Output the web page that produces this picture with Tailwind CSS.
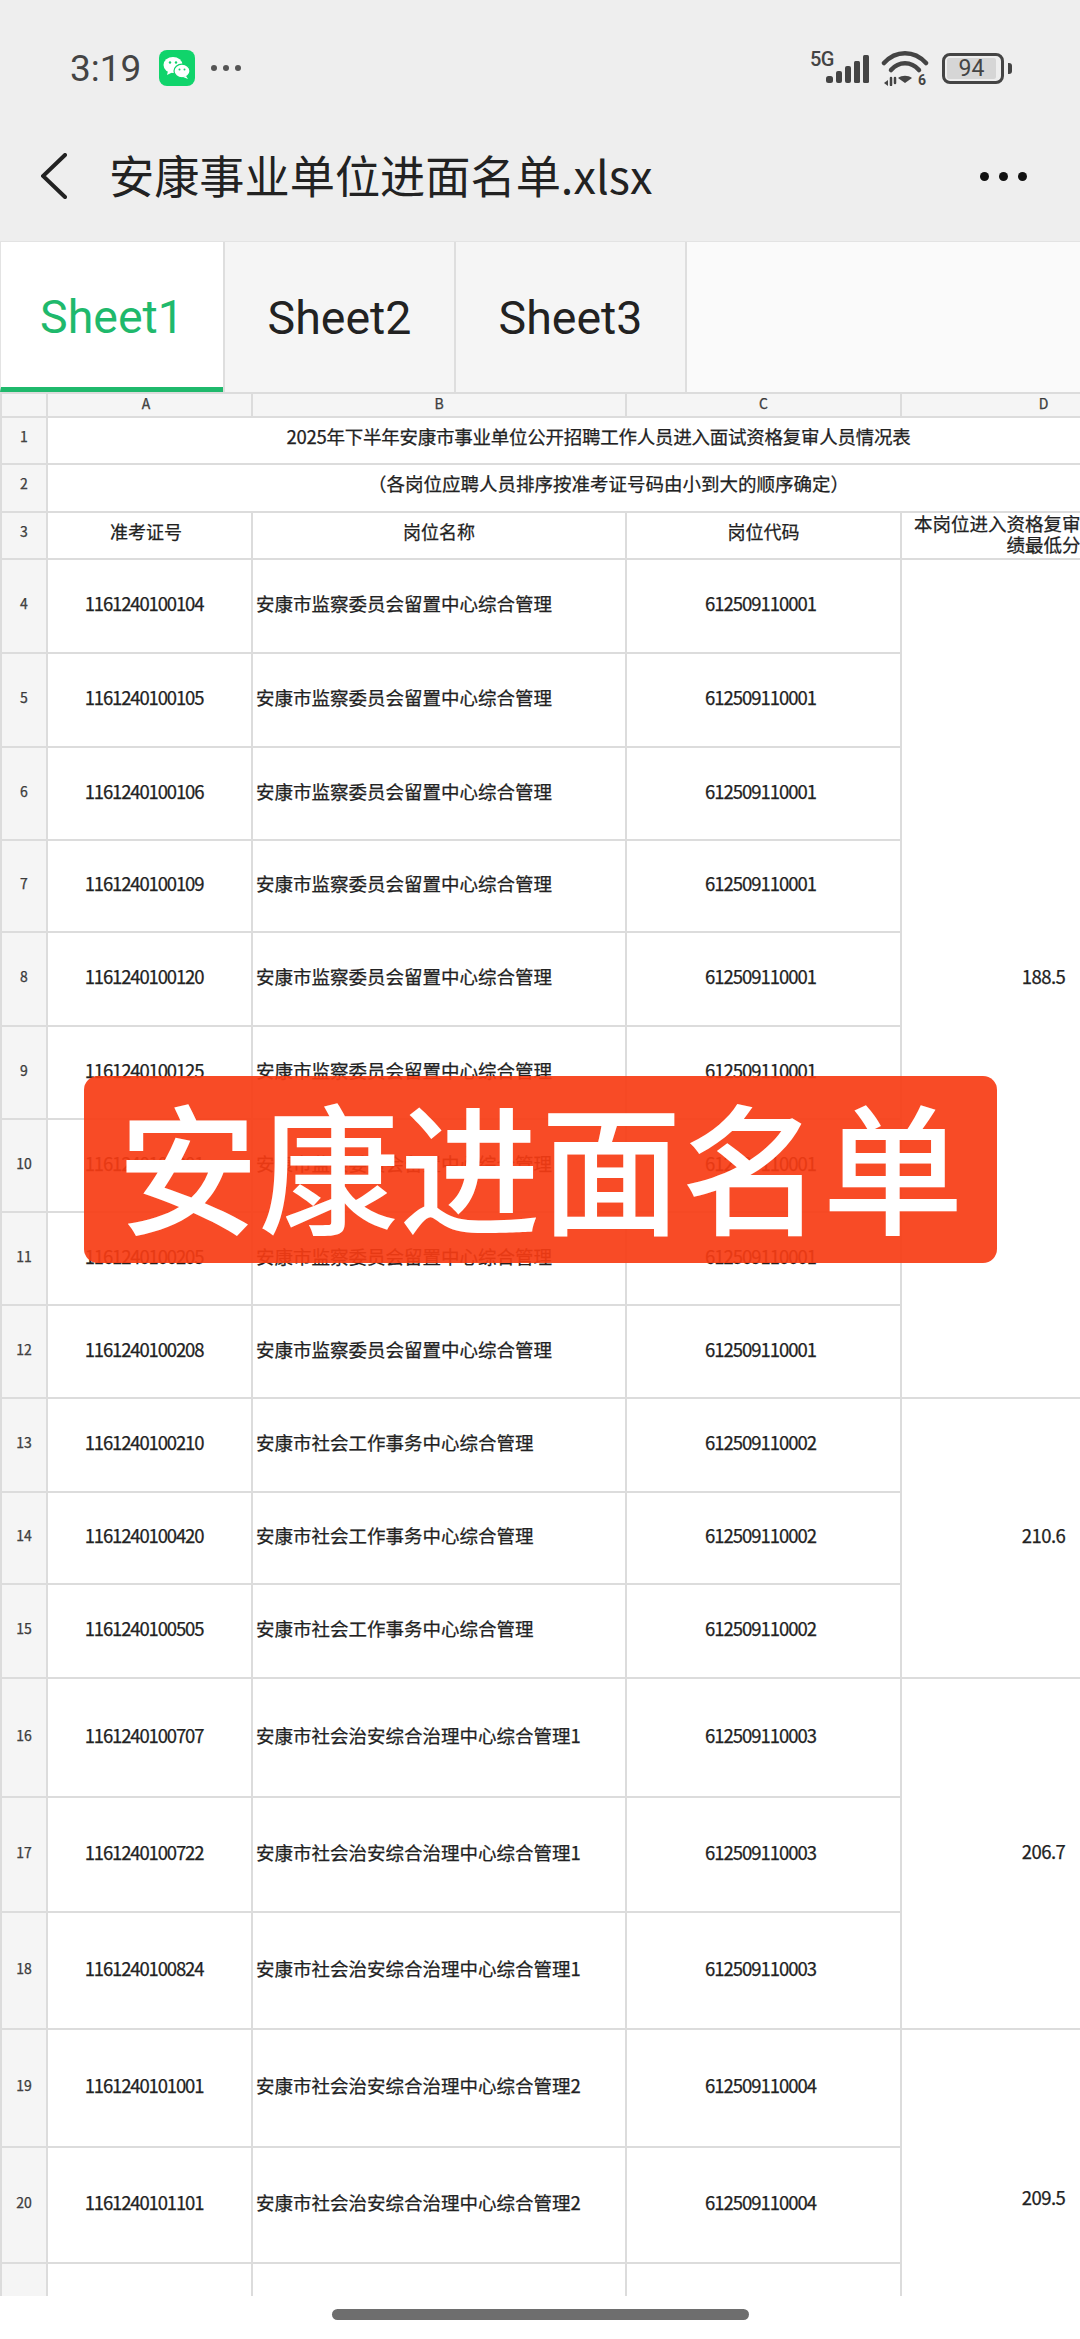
<!DOCTYPE html>
<html lang="zh-CN">
<head>
<meta charset="utf-8">
<title>安康事业单位进面名单.xlsx</title>
<script src="https://cdn.jsdelivr.net/npm/@tailwindcss/browser@4"></script>
</head>
<body class="m-0 bg-white">
<div class="relative w-[1080px] h-[2339px] overflow-hidden bg-white font-['Noto_Sans_CJK_SC','Noto_Sans',sans-serif] text-[#222]">

  <!-- Header -->
  <header class="h-[241px] bg-[#eeeeee] flex flex-col">
    <div class="flex items-center h-[36px] mt-[50px] pl-[70px] pr-[69px]">
      <span class="font-['Roboto',sans-serif] text-[37px] leading-none text-[#444] w-[89px]">3:19</span>
      <svg class="w-[36px] h-[36px]" viewBox="0 0 36 36">
        <rect width="36" height="36" rx="8" fill="#10d46b"/>
        <ellipse cx="14" cy="15" rx="9.5" ry="8" fill="#fff"/>
        <path d="M9 21l-1 4 5-2.5z" fill="#fff"/>
        <ellipse cx="23" cy="21" rx="8" ry="6.8" fill="#fff" stroke="#10d46b" stroke-width="1.2"/>
        <path d="M27 26l2 3-5-2z" fill="#fff"/>
        <circle cx="11" cy="12.5" r="1.2" fill="#10d46b"/><circle cx="17" cy="12.5" r="1.2" fill="#10d46b"/>
        <circle cx="20.5" cy="19.5" r="1" fill="#10d46b"/><circle cx="25.5" cy="19.5" r="1" fill="#10d46b"/>
      </svg>
      <div class="flex gap-[6px] ml-[16px]">
        <span class="w-[6px] h-[6px] rounded-full bg-[#555]"></span>
        <span class="w-[6px] h-[6px] rounded-full bg-[#555]"></span>
        <span class="w-[6px] h-[6px] rounded-full bg-[#555]"></span>
      </div>
      <div class="ml-auto flex items-center">
        <div class="relative w-[60px] h-[36px]">
          <span class="absolute left-0 top-[-1px] font-['Roboto',sans-serif] font-medium text-[20px] leading-[20px] tracking-[-0.5px] text-[#444]">5G</span>
          <svg class="absolute left-0 top-0 w-[60px] h-[36px]" viewBox="0 0 60 36" fill="#444">
            <rect x="16" y="26" width="7" height="7" rx="2.5"/>
            <rect x="26" y="21" width="6" height="12" rx="2"/>
            <rect x="35" y="16" width="6" height="17" rx="2"/>
            <rect x="44" y="11" width="6" height="22" rx="1.5"/>
            <rect x="53" y="5" width="6" height="28" rx="1.5"/>
          </svg>
        </div>
        <svg class="w-[48px] h-[36px] ml-[11px]" viewBox="0 0 48 36" fill="none" stroke="#444" stroke-linecap="round">
          <path d="M3 13C15 0 33 0 45 13" stroke-width="4.5"/>
          <path d="M10 20C18 11 30 11 38 20" stroke-width="4.5"/>
          <path d="M24 33l-7-5c4-3 10-3 14 0z" fill="#444" stroke="none"/>
          <path d="M3 33l4-3v6z" fill="#444" stroke="none"/>
          <path d="M10 28v7M14 28v5" stroke-width="2.5"/>
          <text x="37" y="35" font-size="14" font-weight="700" fill="#444" stroke="none" font-family="Roboto">6</text>
        </svg>
        <div class="relative w-[62px] h-[31px] ml-[13px] border-[3px] border-[#444] rounded-[8px] p-[2px]">
          <div class="h-full w-[49px] bg-[#d6d6d6] rounded-[2px] flex items-center justify-center">
            <span class="font-['Roboto',sans-serif] text-[23px] leading-none text-[#444]">94</span>
          </div>
          <div class="absolute left-[63px] top-[7px] w-[4px] h-[11px] rounded-r-[3px] bg-[#444]"></div>
        </div>
        <div class="w-[7px]"></div>
      </div>
    </div>
    <div class="flex items-center h-[60px] mt-[60px] pl-[41px] pr-[53px]">
      <svg class="w-[26px] h-[46px]" viewBox="0 0 26 46" fill="none" stroke="#222" stroke-width="4" stroke-linecap="round" stroke-linejoin="miter">
        <path d="M24 2L2 23l22 21"/>
      </svg>
      <h1 class="ml-[42px] mb-[2px] text-[45.2px] leading-none font-normal text-[#222] whitespace-nowrap">安康事业单位进面名单.xlsx</h1>
      <div class="ml-auto flex gap-[10px]">
        <span class="w-[9px] h-[9px] rounded-full bg-[#111]"></span>
        <span class="w-[9px] h-[9px] rounded-full bg-[#111]"></span>
        <span class="w-[9px] h-[9px] rounded-full bg-[#111]"></span>
      </div>
    </div>
  </header>

  <!-- Sheet tabs -->
  <nav class="h-[151px] bg-[#fafafa] flex border-t border-[#e3e3e3] font-['Roboto',sans-serif] text-[46.5px]">
    <div class="w-[223px] pt-[7px] bg-white border-l border-[#e3e3e3] border-b-[5px] border-b-[#1fb96c] text-[#1fb96c] flex items-center justify-center">Sheet1</div>
    <div class="w-[231px] pt-[3px] bg-[#f5f5f5] border-l-2 border-[#dedede] text-[#222] flex items-center justify-center">Sheet2</div>
    <div class="w-[233px] pt-[3px] bg-[#f5f5f5] border-x-2 border-[#dedede] text-[#222] flex items-center justify-center">Sheet3</div>
  </nav>

  <!-- Spreadsheet -->
  <div class="h-[1904px] overflow-hidden">
    <table class="w-[1185px] table-fixed border-collapse text-[18.5px] leading-[21px] font-normal [-webkit-text-stroke:0.25px_#222] text-[#222] [&_td]:border-2 [&_td]:border-[#dcdcdc] [&_th]:border-2 [&_th]:border-[#dcdcdc]">
      <colgroup>
        <col class="w-[46px]"><col class="w-[205px]"><col class="w-[374px]"><col class="w-[275px]"><col class="w-[285px]">
      </colgroup>
      <thead>
        <tr class="h-[24px] bg-[#f5f5f5] text-[14px] text-[#444] leading-none">
          <th class="font-normal pb-[4px]"></th><th class="font-normal pb-[4px] pr-[7px]">A</th><th class="font-normal pb-[4px]">B</th><th class="font-normal pb-[4px]">C</th><th class="font-normal pb-[4px]">D</th>
        </tr>
      </thead>
      <tbody class="[&_td]:pb-[5px] [&_td:first-child]:bg-[#f5f5f5] [&_td:first-child]:text-[14px] [&_td:first-child]:text-[#444] [&_td:first-child]:text-center">
        <tr class="h-[47px]"><td class="pb-[9px]!">1</td><td colspan="4" class="text-center pb-[9px]! pr-[36px] tracking-[-0.25px]">2025年下半年安康市事业单位公开招聘工作人员进入面试资格复审人员情况表</td></tr>
        <tr class="h-[48px]"><td class="pb-[9px]!">2</td><td colspan="4" class="text-center pb-[9px]! pr-[16px]">（各岗位应聘人员排序按准考证号码由小到大的顺序确定）</td></tr>
        <tr class="h-[47px] text-center text-[18px]"><td class="pb-[9px]!">3</td><td class="pb-[9px]! pr-[7px]">准考证号</td><td class="pb-[9px]!">岗位名称</td><td class="pb-[9px]!">岗位代码</td><td class="pb-0! px-[10px] align-top text-[18.5px]">本岗位进入资格复审人员笔试成绩最低分</td></tr>

        <tr class="h-[94px]"><td>4</td><td class="text-center pr-[11px] tracking-[-1.15px]">1161240100104</td><td class="pl-[3px]">安康市监察委员会留置中心综合管理</td><td class="text-center pr-[6px] tracking-[-1px]">612509110001</td><td rowspan="9" class="text-center tracking-[-0.5px]">188.5</td></tr>
        <tr class="h-[94px]"><td>5</td><td class="text-center pr-[11px] tracking-[-1.15px]">1161240100105</td><td class="pl-[3px]">安康市监察委员会留置中心综合管理</td><td class="text-center pr-[6px] tracking-[-1px]">612509110001</td></tr>
        <tr class="h-[93px]"><td>6</td><td class="text-center pr-[11px] tracking-[-1.15px]">1161240100106</td><td class="pl-[3px]">安康市监察委员会留置中心综合管理</td><td class="text-center pr-[6px] tracking-[-1px]">612509110001</td></tr>
        <tr class="h-[92px]"><td>7</td><td class="text-center pr-[11px] tracking-[-1.15px]">1161240100109</td><td class="pl-[3px]">安康市监察委员会留置中心综合管理</td><td class="text-center pr-[6px] tracking-[-1px]">612509110001</td></tr>
        <tr class="h-[94px]"><td>8</td><td class="text-center pr-[11px] tracking-[-1.15px]">1161240100120</td><td class="pl-[3px]">安康市监察委员会留置中心综合管理</td><td class="text-center pr-[6px] tracking-[-1px]">612509110001</td></tr>
        <tr class="h-[93px]"><td>9</td><td class="text-center pr-[11px] tracking-[-1.15px]">1161240100125</td><td class="pl-[3px]">安康市监察委员会留置中心综合管理</td><td class="text-center pr-[6px] tracking-[-1px]">612509110001</td></tr>
        <tr class="h-[93px]"><td>10</td><td class="text-center pr-[11px] tracking-[-1.15px]">1161240100201</td><td class="pl-[3px]">安康市监察委员会留置中心综合管理</td><td class="text-center pr-[6px] tracking-[-1px]">612509110001</td></tr>
        <tr class="h-[93px]"><td>11</td><td class="text-center pr-[11px] tracking-[-1.15px]">1161240100205</td><td class="pl-[3px]">安康市监察委员会留置中心综合管理</td><td class="text-center pr-[6px] tracking-[-1px]">612509110001</td></tr>
        <tr class="h-[93px]"><td>12</td><td class="text-center pr-[11px] tracking-[-1.15px]">1161240100208</td><td class="pl-[3px]">安康市监察委员会留置中心综合管理</td><td class="text-center pr-[6px] tracking-[-1px]">612509110001</td></tr>

        <tr class="h-[94px]"><td>13</td><td class="text-center pr-[11px] tracking-[-1.15px]">1161240100210</td><td class="pl-[3px]">安康市社会工作事务中心综合管理</td><td class="text-center pr-[6px] tracking-[-1px]">612509110002</td><td rowspan="3" class="text-center tracking-[-0.5px]">210.6</td></tr>
        <tr class="h-[92px]"><td>14</td><td class="text-center pr-[11px] tracking-[-1.15px]">1161240100420</td><td class="pl-[3px]">安康市社会工作事务中心综合管理</td><td class="text-center pr-[6px] tracking-[-1px]">612509110002</td></tr>
        <tr class="h-[94px]"><td>15</td><td class="text-center pr-[11px] tracking-[-1.15px]">1161240100505</td><td class="pl-[3px]">安康市社会工作事务中心综合管理</td><td class="text-center pr-[6px] tracking-[-1px]">612509110002</td></tr>

        <tr class="h-[119px]"><td>16</td><td class="text-center pr-[11px] tracking-[-1.15px]">1161240100707</td><td class="pl-[3px]">安康市社会治安综合治理中心综合管理1</td><td class="text-center pr-[6px] tracking-[-1px]">612509110003</td><td rowspan="3" class="text-center tracking-[-0.5px]">206.7</td></tr>
        <tr class="h-[115px]"><td>17</td><td class="text-center pr-[11px] tracking-[-1.15px]">1161240100722</td><td class="pl-[3px]">安康市社会治安综合治理中心综合管理1</td><td class="text-center pr-[6px] tracking-[-1px]">612509110003</td></tr>
        <tr class="h-[117px]"><td>18</td><td class="text-center pr-[11px] tracking-[-1.15px]">1161240100824</td><td class="pl-[3px]">安康市社会治安综合治理中心综合管理1</td><td class="text-center pr-[6px] tracking-[-1px]">612509110003</td></tr>

        <tr class="h-[118px]"><td>19</td><td class="text-center pr-[11px] tracking-[-1.15px]">1161240101001</td><td class="pl-[3px]">安康市社会治安综合治理中心综合管理2</td><td class="text-center pr-[6px] tracking-[-1px]">612509110004</td><td rowspan="3" class="text-center tracking-[-0.5px]">209.5</td></tr>
        <tr class="h-[116px]"><td>20</td><td class="text-center pr-[11px] tracking-[-1.15px]">1161240101101</td><td class="pl-[3px]">安康市社会治安综合治理中心综合管理2</td><td class="text-center pr-[6px] tracking-[-1px]">612509110004</td></tr>
        <tr class="h-[108px]"><td></td><td></td><td></td><td></td></tr>
      </tbody>
    </table>
  </div>

  <!-- Home indicator -->
  <div class="h-[44px] flex justify-center pt-[13px]">
    <div class="w-[417px] h-[11px] rounded-full bg-[#6e6e6e]"></div>
  </div>

  <!-- Banner overlay -->
  <div class="absolute left-[84px] top-[1076px] w-[913px] h-[187px] rounded-[14px] bg-[#f73c13]/92 flex items-center justify-center">
    <span class="text-white text-[141px] leading-none font-medium whitespace-nowrap pb-[14px]">安康进面名单</span>
  </div>
</div>
</body>
</html>
